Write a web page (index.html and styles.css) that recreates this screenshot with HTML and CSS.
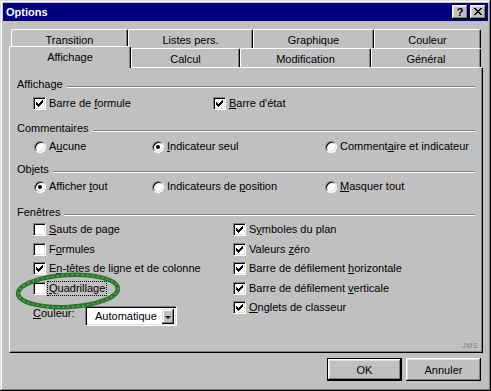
FILE: index.html
```html
<!DOCTYPE html>
<html lang="fr">
<head>
<meta charset="utf-8">
<title>Options</title>
<link rel="stylesheet" href="styles.css">
</head>
<body>
<div class="window">
  <div class="titlebar">
    <span class="title">Options</span>
    <div class="caption-btns">
      <div class="cap-btn help">?</div>
      <div class="cap-btn close"><svg width="8" height="7" viewBox="0 0 8 7" shape-rendering="crispEdges"><path fill="#000" d="M0 0h2v1h-2z M6 0h2v1h-2z M1 1h2v1h-2z M5 1h2v1h-2z M2 2h4v1h-4z M3 3h2v1h-2z M2 4h4v1h-4z M1 5h2v1h-2z M5 5h2v1h-2z M0 6h2v1h-2z M6 6h2v1h-2z"/></svg></div>
    </div>
  </div>

  <div class="tabstrip">
    <div class="tabrow back">
      <div class="tab t-transition">Transition</div>
      <div class="tab t-listes">Listes pers.</div>
      <div class="tab t-graphique">Graphique</div>
      <div class="tab t-couleur">Couleur</div>
    </div>
    <div class="tabrow front">
      <div class="tab selected t-affichage">Affichage</div>
      <div class="tab t-calcul">Calcul</div>
      <div class="tab t-modification">Modification</div>
      <div class="tab t-general">Général</div>
    </div>
  </div>

  <div class="panel">
    <div class="group g1">
      <div class="group-head"><span>Affichage</span><span class="rule"></span></div>
      <div class="rows">
        <div class="opt"><span class="check"><svg class="tick" width="7" height="7" viewBox="0 0 7 7" shape-rendering="crispEdges"><path d="M6 0h1v1h-1z M5 1h2v1h-2z M0 2h1v1h-1z M4 2h3v1h-3z M0 3h2v1h-2z M3 3h3v1h-3z M0 4h5v1h-5z M1 5h3v1h-3z M2 6h1v1h-1z"/></svg></span><span class="lbl">Barre de <u>f</u>ormule</span></div>
        <div class="opt"><span class="check"><svg class="tick" width="7" height="7" viewBox="0 0 7 7" shape-rendering="crispEdges"><path d="M6 0h1v1h-1z M5 1h2v1h-2z M0 2h1v1h-1z M4 2h3v1h-3z M0 3h2v1h-2z M3 3h3v1h-3z M0 4h5v1h-5z M1 5h3v1h-3z M2 6h1v1h-1z"/></svg></span><span class="lbl"><u>B</u>arre d'état</span></div>
      </div>
    </div>

    <div class="group g2">
      <div class="group-head"><span>Commentaires</span><span class="rule"></span></div>
      <div class="rows">
        <div class="opt"><span class="radio"></span><span class="lbl">A<u>u</u>cune</span></div>
        <div class="opt"><span class="radio on"></span><span class="lbl"><u>I</u>ndicateur seul</span></div>
        <div class="opt"><span class="radio"></span><span class="lbl">Comment<u>a</u>ire et indicateur</span></div>
      </div>
    </div>

    <div class="group g3">
      <div class="group-head"><span>Objets</span><span class="rule"></span></div>
      <div class="rows">
        <div class="opt"><span class="radio on"></span><span class="lbl">Afficher <u>t</u>out</span></div>
        <div class="opt"><span class="radio"></span><span class="lbl">Indicateurs de <u>p</u>osition</span></div>
        <div class="opt"><span class="radio"></span><span class="lbl"><u>M</u>asquer tout</span></div>
      </div>
    </div>

    <div class="group g4">
      <div class="group-head"><span>Fenêtres</span><span class="rule"></span></div>
      <div class="rows">
        <div class="col">
          <div class="opt"><span class="check"></span><span class="lbl"><u>S</u>auts de page</span></div>
          <div class="opt"><span class="check"></span><span class="lbl">F<u>o</u>rmules</span></div>
          <div class="opt"><span class="check"><svg class="tick" width="7" height="7" viewBox="0 0 7 7" shape-rendering="crispEdges"><path d="M6 0h1v1h-1z M5 1h2v1h-2z M0 2h1v1h-1z M4 2h3v1h-3z M0 3h2v1h-2z M3 3h3v1h-3z M0 4h5v1h-5z M1 5h3v1h-3z M2 6h1v1h-1z"/></svg></span><span class="lbl">E<u>n</u>-têtes de ligne et de colonne</span></div>
          <div class="opt"><span class="check"></span><span class="lbl focus"><u>Q</u>uadrillage</span></div>
          <div class="couleur">
            <span class="couleur-lbl"><u>C</u>ouleur:</span>
            <div class="combo">
              <span class="combo-text">Automatique</span>
              <span class="combo-btn"><span class="arrow"></span></span>
            </div>
          </div>
        </div>
        <div class="col">
          <div class="opt"><span class="check"><svg class="tick" width="7" height="7" viewBox="0 0 7 7" shape-rendering="crispEdges"><path d="M6 0h1v1h-1z M5 1h2v1h-2z M0 2h1v1h-1z M4 2h3v1h-3z M0 3h2v1h-2z M3 3h3v1h-3z M0 4h5v1h-5z M1 5h3v1h-3z M2 6h1v1h-1z"/></svg></span><span class="lbl">S<u>y</u>mboles du plan</span></div>
          <div class="opt"><span class="check"><svg class="tick" width="7" height="7" viewBox="0 0 7 7" shape-rendering="crispEdges"><path d="M6 0h1v1h-1z M5 1h2v1h-2z M0 2h1v1h-1z M4 2h3v1h-3z M0 3h2v1h-2z M3 3h3v1h-3z M0 4h5v1h-5z M1 5h3v1h-3z M2 6h1v1h-1z"/></svg></span><span class="lbl">Valeurs <u>z</u>éro</span></div>
          <div class="opt"><span class="check"><svg class="tick" width="7" height="7" viewBox="0 0 7 7" shape-rendering="crispEdges"><path d="M6 0h1v1h-1z M5 1h2v1h-2z M0 2h1v1h-1z M4 2h3v1h-3z M0 3h2v1h-2z M3 3h3v1h-3z M0 4h5v1h-5z M1 5h3v1h-3z M2 6h1v1h-1z"/></svg></span><span class="lbl">Barre de défilement <u>h</u>orizontale</span></div>
          <div class="opt"><span class="check"><svg class="tick" width="7" height="7" viewBox="0 0 7 7" shape-rendering="crispEdges"><path d="M6 0h1v1h-1z M5 1h2v1h-2z M0 2h1v1h-1z M4 2h3v1h-3z M0 3h2v1h-2z M3 3h3v1h-3z M0 4h5v1h-5z M1 5h3v1h-3z M2 6h1v1h-1z"/></svg></span><span class="lbl">Barre de défilement <u>v</u>erticale</span></div>
          <div class="opt"><span class="check"><svg class="tick" width="7" height="7" viewBox="0 0 7 7" shape-rendering="crispEdges"><path d="M6 0h1v1h-1z M5 1h2v1h-2z M0 2h1v1h-1z M4 2h3v1h-3z M0 3h2v1h-2z M3 3h3v1h-3z M0 4h5v1h-5z M1 5h3v1h-3z M2 6h1v1h-1z"/></svg></span><span class="lbl"><u>O</u>nglets de classeur</span></div>
        </div>
      </div>
    </div>

    <div class="jms">JMS</div>

    <svg class="annotation" width="112" height="46" viewBox="0 0 112 46">
      <g transform="rotate(-3 53 23)">
        <ellipse cx="53" cy="23" rx="50" ry="16" fill="none" stroke="#1f6e1f" stroke-width="4.5" stroke-opacity="0.92"/>
        <ellipse cx="53" cy="23" rx="50" ry="16" fill="none" stroke="#5aa85a" stroke-width="1.5" stroke-dasharray="2 3"/>
        <ellipse cx="53.5" cy="22.5" rx="51" ry="17" fill="none" stroke="#3d8f3d" stroke-width="1" stroke-dasharray="1 4" stroke-opacity="0.8"/>
      </g>
    </svg>
  </div>

  <div class="buttons">
    <div class="btn default">OK</div>
    <div class="btn">Annuler</div>
  </div>
</div>
</body>
</html>
```

FILE: styles.css
```css
* { box-sizing: border-box; }

html, body {
  margin: 0;
  padding: 0;
}

body {
  width: 491px;
  height: 391px;
  overflow: hidden;
  background: #c0c0c0;
  font-family: "Liberation Sans", Arial, sans-serif;
  font-size: 11px;
  color: #000;
}

.window {
  width: 491px;
  height: 391px;
  padding: 3px;
  background: #c0c0c0;
  box-shadow: inset -1px -1px #000, inset 1px 1px #dfdfdf, inset -2px -2px #808080, inset 2px 2px #fff;
  display: flex;
  flex-direction: column;
}

/* Title bar */
.titlebar {
  flex: none;
  height: 18px;
  background: #000080;
  display: flex;
  align-items: center;
  justify-content: space-between;
  padding: 0 2px 0 3px;
}

.title {
  color: #fff;
  font-weight: bold;
  font-size: 11px;
  line-height: 14px;
}

.caption-btns {
  display: flex;
  gap: 2px;
}

.cap-btn {
  width: 16px;
  height: 14px;
  background: #c0c0c0;
  box-shadow: inset -1px -1px #000, inset 1px 1px #fff, inset -2px -2px #808080, inset 2px 2px #dfdfdf;
}

.help {
  font-weight: bold;
  font-size: 11px;
  line-height: 14px;
  text-align: center;
}

.close {
  padding: 3px 0 0 4px;
}

.close svg { display: block; }

/* Tabs */
.tabstrip {
  flex: none;
  margin-top: 8px;
}

.tabrow {
  display: flex;
  height: 19px;
}

.tabrow.back { margin-left: 8px; }
.tabrow.front { margin-left: 6px; }

.tab {
  flex: none;
  height: 19px;
  background: #c0c0c0;
  border-top: 1px solid #fff;
  border-left: 1px solid #fff;
  border-right: 1px solid #000;
  border-radius: 2px 2px 0 0;
  box-shadow: inset -1px 0 #808080;
  text-align: center;
  padding-top: 3px;
  line-height: 14px;
  white-space: nowrap;
}

.tab.selected {
  height: 22px;
  margin-top: -2px;
  position: relative;
  z-index: 1;
}

.t-transition { width: 117px; }
.t-listes { width: 125px; }
.t-graphique { width: 121px; }
.t-couleur { width: 107px; }
.t-affichage { width: 122px; }
.t-calcul { width: 109px; }
.t-modification { width: 131px; }
.t-general { width: 110px; }

/* Panel */
.panel {
  flex: none;
  position: relative;
  width: 474px;
  height: 286px;
  margin-left: 6px;
  border: 1px solid;
  border-color: #fff #000 #000 #fff;
  box-shadow: inset -1px -1px #808080;
  padding: 9px 7px 2px 7px;
  display: flex;
  flex-direction: column;
}

.group-head {
  display: flex;
  height: 14px;
  line-height: 14px;
  white-space: nowrap;
}

.rule {
  flex: 1;
  height: 2px;
  margin: 9px 0 0 4px;
  border-top: 1px solid #808080;
  border-bottom: 1px solid #fff;
}

.g2 { margin-top: 8px; }
.g3 { margin-top: 6px; }
.g4 { margin-top: 9px; }

.rows {
  display: grid;
  padding-left: 16px;
}

.g1 .rows {
  margin-top: 3px;
  grid-template-columns: 180px 1fr;
}

.g2 .rows,
.g3 .rows {
  grid-template-columns: 118px 173px 1fr;
}

.g2 .rows { margin-top: 2px; }
.g3 .rows { margin-top: 1px; }

.g4 .rows {
  margin-top: 1px;
  grid-template-columns: 200px 1fr;
}

.col {
  display: flex;
  flex-direction: column;
}

.opt {
  display: flex;
  align-items: center;
  height: 19px;
  white-space: nowrap;
}

.g4 .opt { height: 19.5px; }

.lbl {
  margin-left: 3px;
  line-height: 13px;
}

.lbl.focus {
  margin-left: 1px;
  padding: 0 1px;
  border: 1px dotted #000;
}

.check {
  flex: none;
  width: 13px;
  height: 13px;
  background: #fff;
  border: 1px solid;
  border-color: #808080 #fff #fff #808080;
  box-shadow: inset 1px 1px #000, inset -1px -1px #dfdfdf;
}

.tick {
  display: block;
  margin: 2px 0 0 2px;
}

.radio {
  flex: none;
  width: 12px;
  height: 12px;
  margin-left: 1px;
  border-radius: 50%;
  background: #fff;
  border: 1px solid;
  border-color: #808080 #fff #fff #808080;
  box-shadow: inset 1px 1px #000, inset -1px -1px #dfdfdf;
  display: flex;
  align-items: center;
  justify-content: center;
}

.radio.on::after {
  content: "";
  width: 4px;
  height: 4px;
  border-radius: 50%;
  background: #000;
}

/* Couleur combo */
.couleur {
  display: flex;
  align-items: flex-start;
  margin-top: 8px;
  height: 20px;
}

.couleur-lbl {
  width: 52px;
  line-height: 14px;
}

.combo {
  width: 92px;
  height: 20px;
  display: flex;
  padding: 2px;
  background: #fff;
  border: 1px solid;
  border-color: #808080 #fff #fff #808080;
  box-shadow: inset 1px 1px #000, inset -1px -1px #dfdfdf;
}

.combo-text {
  flex: 1;
  padding-left: 7px;
  line-height: 15px;
}

.combo-btn {
  width: 12px;
  height: 15px;
  background: #c0c0c0;
  box-shadow: inset -1px -1px #000, inset 1px 1px #dfdfdf, inset -2px -2px #808080, inset 2px 2px #fff;
  display: flex;
  align-items: center;
  justify-content: center;
}

.arrow {
  width: 0;
  height: 0;
  border-left: 3px solid transparent;
  border-right: 3px solid transparent;
  border-top: 3px solid #000;
  margin-top: 1px;
}

.jms {
  margin-top: auto;
  align-self: flex-end;
  margin-right: -3px;
  margin-bottom: 1px;
  font-size: 7px;
  line-height: 7px;
  letter-spacing: 0.5px;
  color: #808080;
}

.annotation {
  position: absolute;
  left: 5px;
  top: 200px;
  pointer-events: none;
}

/* Buttons */
.buttons {
  flex: none;
  display: flex;
  justify-content: flex-end;
  gap: 4px;
  margin-top: 5px;
  padding-right: 7px;
}

.btn {
  width: 75px;
  height: 23px;
  display: flex;
  align-items: center;
  justify-content: center;
  background: #c0c0c0;
  box-shadow: inset -1px -1px #000, inset 1px 1px #fff, inset -2px -2px #808080, inset 2px 2px #dfdfdf;
}

.btn.default {
  border: 1px solid #000;
}
```
